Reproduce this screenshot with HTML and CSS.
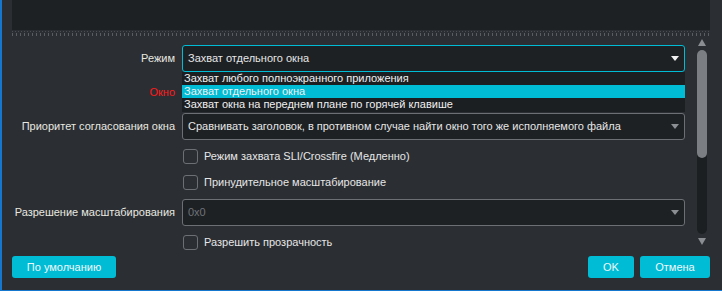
FILE: index.html
```html
<!DOCTYPE html>
<html lang="ru">
<head>
    <meta charset="UTF-8">
    <title>Свойства захвата окна</title>
    <link rel="stylesheet" href="styles.css">
</head>
<body>
    <div class="window">
        <div class="preview"></div>
        <div class="splitter"></div>

        <div class="body">
            <div class="form">
                <!-- Режим -->
                <div class="row">
                    <div class="label">Режим</div>
                    <div class="field">
                        <div class="combo focus">
                            <span>Захват отдельного окна</span>
                            <span class="arrow light"></span>
                        </div>
                        <div class="popup">
                            <div class="item">Захват любого полноэкранного приложения</div>
                            <div class="item selected">Захват отдельного окна</div>
                            <div class="item">Захват окна на переднем плане по горячей клавише</div>
                        </div>
                    </div>
                </div>

                <!-- Окно -->
                <div class="row">
                    <div class="label red">Окно</div>
                    <div class="field">
                        <div class="combo"><span></span><span class="arrow"></span></div>
                    </div>
                </div>

                <div class="row">
                    <div class="label">Приоритет согласования окна</div>
                    <div class="field">
                        <div class="combo">
                            <span>Сравнивать заголовок, в противном случае найти окно того же исполняемого файла</span>
                            <span class="arrow"></span>
                        </div>
                    </div>
                </div>

                <div class="row check-row">
                    <div class="label"></div>
                    <div class="field check"><span class="box"></span>Режим захвата SLI/Crossfire (Медленно)</div>
                </div>

                <div class="row check-row">
                    <div class="label"></div>
                    <div class="field check"><span class="box"></span>Принудительное масштабирование</div>
                </div>

                <div class="row">
                    <div class="label">Разрешение масштабирования</div>
                    <div class="field">
                        <div class="combo disabled"><span>0x0</span><span class="arrow"></span></div>
                    </div>
                </div>

                <div class="row check-row">
                    <div class="label"></div>
                    <div class="field check"><span class="box"></span>Разрешить прозрачность</div>
                </div>
            </div>

            <div class="scrollbar">
                <span class="sb-up"></span>
                <div class="track"><div class="handle"></div></div>
                <span class="sb-down"></span>
            </div>
        </div>

        <div class="buttons">
            <button class="btn wide">По умолчанию</button>
            <div class="spacer"></div>
            <button class="btn ok">OK</button>
            <button class="btn cancel">Отмена</button>
        </div>
    </div>
</body>
</html>
```

FILE: styles.css
```css
* {
    box-sizing: border-box;
}

body {
    margin: 0;
    background-color: #2b2e33;
    font-family: "Liberation Sans", Arial, sans-serif;
    font-size: 11px;
    color: #e6e6e6;
}

.window {
    width: 722px;
    height: 291px;
    border-left: 2px solid #1677cf;
    border-bottom: 1px solid #1677cf;
    display: flex;
    flex-direction: column;
    overflow: hidden;
}

.preview {
    margin-left: 10px;
    width: 698px;
    height: 30px;
    background-color: #1e2124;
}

.splitter {
    margin-left: 10px;
    width: 698px;
    height: 8px;
    background-image:
        repeating-linear-gradient(90deg, #4a4e54 0 1px, transparent 1px 3px),
        repeating-linear-gradient(90deg, #5a5e64 0 1px, transparent 1px 4px);
    background-size: 100% 1px, 100% 3px;
    background-position: 0 1px, 0 3px;
    background-repeat: no-repeat;
}

.body {
    height: 212px;
    display: flex;
    overflow: hidden;
}

.form {
    width: 683px;
    padding-top: 6px;
    display: flex;
    flex-direction: column;
    gap: 6px;
}

.row {
    display: flex;
    align-items: center;
    height: 28px;
    flex-shrink: 0;
}

.check-row {
    height: 20px;
}

.label {
    width: 173px;
    text-align: right;
    white-space: nowrap;
    color: #e8e8e0;
}

.label.red {
    color: #ff1a1a;
}

.field {
    position: relative;
    margin-left: 7px;
    width: 503px;
}

.combo {
    height: 27px;
    display: flex;
    align-items: center;
    justify-content: space-between;
    padding: 0 5px 0 5px;
    background-color: #1e2124;
    border: 1px solid #6c7075;
    border-radius: 3px;
    white-space: nowrap;
}

.combo.focus {
    border-color: #00bcd4;
}

.combo.disabled {
    color: #6f7378;
}

.arrow {
    width: 0;
    height: 0;
    border-left: 4px solid transparent;
    border-right: 4px solid transparent;
    border-top: 5px solid #8b8e92;
}

.arrow.light {
    border-top-color: #f0f0f0;
}

.popup {
    position: absolute;
    left: 0;
    top: 27px;
    width: 503px;
    padding-bottom: 1px;
    background-color: #1c1f22;
    z-index: 10;
}

.item {
    height: 13px;
    line-height: 13px;
    padding-left: 2px;
    color: #f0f0f0;
}

.item.selected {
    background-color: #00bcd4;
}

.check {
    display: flex;
    align-items: center;
    padding-left: 1px;
    white-space: nowrap;
}

.box {
    width: 15px;
    height: 15px;
    margin-right: 6px;
    border: 1px solid #6c7075;
    border-radius: 3px;
}

.scrollbar {
    margin-left: 12px;
    width: 10px;
    display: flex;
    flex-direction: column;
    align-items: center;
    padding-top: 1px;
}

.sb-up,
.sb-down {
    width: 0;
    height: 0;
    border-left: 4px solid transparent;
    border-right: 4px solid transparent;
}

.sb-up {
    border-bottom: 7px solid #8b8e92;
}

.sb-down {
    margin-top: 4px;
    border-top: 7px solid #8b8e92;
}

.track {
    margin-top: 4px;
    width: 10px;
    height: 184px;
    background-color: #1c1f22;
    border-radius: 5px;
}

.handle {
    height: 108px;
    background-color: #7b7f83;
    border-radius: 5px;
}

.buttons {
    display: flex;
    gap: 6px;
    padding: 6px 12px 0 10px;
}

.spacer {
    flex: 1;
}

.btn {
    height: 22px;
    border: none;
    border-radius: 3px;
    background-color: #00bcd4;
    color: #eef8fa;
    font-family: inherit;
    font-size: 11px;
    padding: 0;
}

.btn.wide {
    width: 104px;
}

.btn.ok {
    width: 46px;
}

.btn.cancel {
    width: 70px;
}
```
